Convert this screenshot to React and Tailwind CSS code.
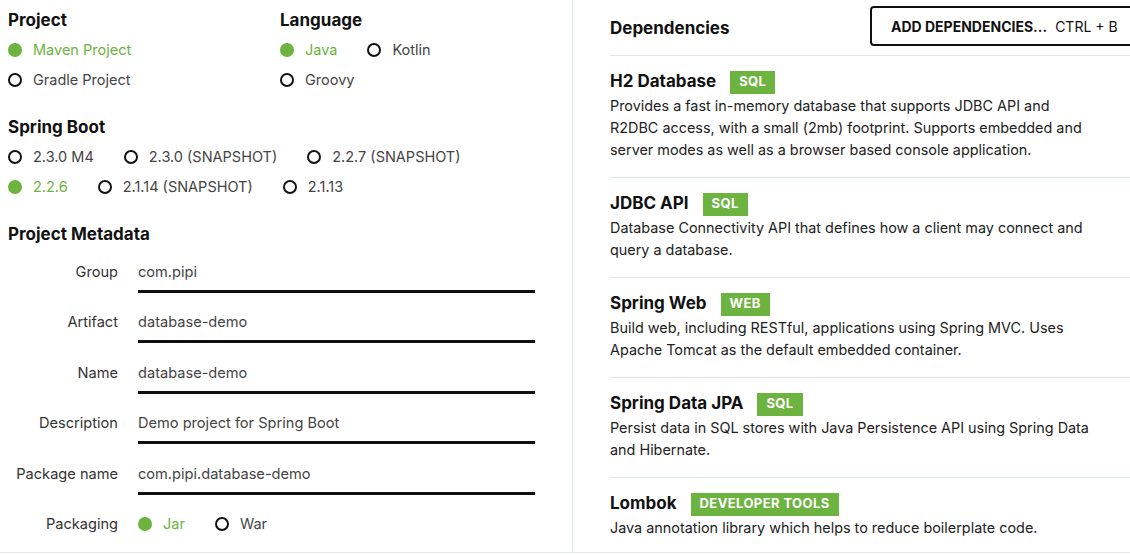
import React from 'react';

const font = { fontFamily: 'Inter, "Noto Sans", sans-serif' };

function Radio({ label, checked }) {
  return (
    <div className="flex items-center mr-[30px]">
      {checked ? (
        <span className="w-[14px] h-[14px] rounded-full bg-[#6db33f] mr-[11px]" />
      ) : (
        <span className="w-[14px] h-[14px] rounded-full border-2 border-[#111] mr-[11px]" />
      )}
      <span className={`text-[14.5px] ${checked ? 'text-[#6db33f]' : 'text-[#444]'}`}>{label}</span>
    </div>
  );
}

function Heading({ children, className = '' }) {
  return <h2 className={`text-[17px] font-bold text-[#111] leading-6 ${className}`}>{children}</h2>;
}

function Field({ label, value }) {
  return (
    <div className="flex items-start mb-[17.4px]">
      <div className="w-[110px] text-right text-[14.6px] text-[#333] leading-6">{label}</div>
      <div className="ml-[20px] w-[397px] border-b-[3px] border-[#111] pb-[6px] text-[14.6px] text-[#444] leading-6">
        {value}
      </div>
    </div>
  );
}

const deps = [
  {
    name: 'H2 Database',
    tag: 'SQL',
    desc: 'Provides a fast in-memory database that supports JDBC API and R2DBC access, with a small (2mb) footprint. Supports embedded and server modes as well as a browser based console application.',
  },
  {
    name: 'JDBC API',
    tag: 'SQL',
    desc: 'Database Connectivity API that defines how a client may connect and query a database.',
  },
  {
    name: 'Spring Web',
    tag: 'WEB',
    desc: 'Build web, including RESTful, applications using Spring MVC. Uses Apache Tomcat as the default embedded container.',
  },
  {
    name: 'Spring Data JPA',
    tag: 'SQL',
    desc: 'Persist data in SQL stores with Java Persistence API using Spring Data and Hibernate.',
  },
  {
    name: 'Lombok',
    tag: 'DEVELOPER TOOLS',
    desc: 'Java annotation library which helps to reduce boilerplate code.',
  },
];

export default function App() {
  return (
    <div className="w-[1130px] h-[555px] overflow-hidden bg-white" style={font}>
      <div className="flex w-[1140px] h-[553px] border-b border-[#e3ebed]">
        {/* left: project options */}
        <div className="w-[573px] shrink-0 border-r border-[#dde6e8] pl-2 pt-2">
          <div className="flex">
            <div className="w-[272px]">
              <Heading>Project</Heading>
              <div className="mt-[3px]">
                <div className="h-[30px] flex items-center"><Radio label="Maven Project" checked /></div>
                <div className="h-[30px] flex items-center"><Radio label="Gradle Project" /></div>
              </div>
            </div>
            <div>
              <Heading>Language</Heading>
              <div className="mt-[3px]">
                <div className="h-[30px] flex items-center">
                  <Radio label="Java" checked />
                  <Radio label="Kotlin" />
                </div>
                <div className="h-[30px] flex items-center"><Radio label="Groovy" /></div>
              </div>
            </div>
          </div>

          <Heading className="mt-[20px]">Spring Boot</Heading>
          <div className="mt-[3px]">
            <div className="h-[30px] flex items-center">
              <Radio label="2.3.0 M4" />
              <Radio label="2.3.0 (SNAPSHOT)" />
              <Radio label="2.2.7 (SNAPSHOT)" />
            </div>
            <div className="h-[30px] flex items-center">
              <Radio label="2.2.6" checked />
              <Radio label="2.1.14 (SNAPSHOT)" />
              <Radio label="2.1.13" />
            </div>
          </div>

          <Heading className="mt-[20px]">Project Metadata</Heading>
          <div className="mt-[14px]">
            <Field label="Group" value="com.pipi" />
            <Field label="Artifact" value="database-demo" />
            <Field label="Name" value="database-demo" />
            <Field label="Description" value="Demo project for Spring Boot" />
            <Field label="Package name" value="com.pipi.database-demo" />
            <div className="flex items-center">
              <div className="w-[110px] text-right text-[14.6px] text-[#333] leading-6">Packaging</div>
              <div className="ml-[20px] flex items-center">
                <Radio label="Jar" checked />
                <Radio label="War" />
              </div>
            </div>
          </div>
        </div>

        {/* right: dependencies */}
        <div className="flex-1 pl-[37px]">
          <div className="h-[56px] flex items-center justify-between border-b border-[#dde6e8]">
            <Heading>Dependencies</Heading>
            <button className="h-[40px] w-[270px] border-2 border-[#111] rounded-[4px] flex items-center pl-[19px] text-[14px] text-[#111] mb-[3px]">
              <span className="font-bold">ADD DEPENDENCIES...</span>
              <span className="ml-[8px]">CTRL + B</span>
            </button>
          </div>
          {deps.map((d, i) => (
            <div
              key={d.name}
              className={`pt-[14px] ${i < deps.length - 1 ? 'pb-[16px] border-b border-[#dde6e8]' : ''}`}
            >
              <div className="flex items-center h-[24px]">
                <span className="text-[17px] font-bold text-[#111]">{d.name}</span>
                <span className="ml-[14px] h-[23px] px-[9px] bg-[#6db33f] text-white text-[13px] tracking-[0.4px] font-bold flex items-center">
                  {d.tag}
                </span>
              </div>
              <p className="mt-[1px] w-[490px] text-[14.4px] leading-[22px] text-[#222]">{d.desc}</p>
            </div>
          ))}
        </div>
      </div>
    </div>
  );
}
